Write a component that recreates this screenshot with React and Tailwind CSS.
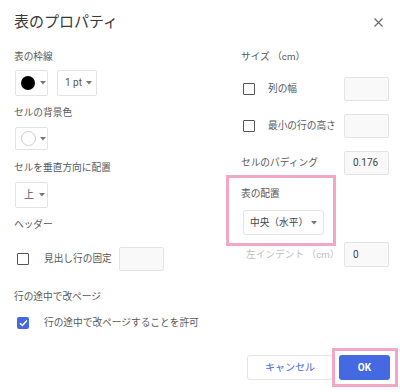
import React from "react";

const Caret = () => (
  <svg width="6" height="4" viewBox="0 0 6 4" className="shrink-0">
    <path d="M0 0h6L3 3.5z" fill="#777" />
  </svg>
);

const Box = ({ checked }) =>
  checked ? (
    <span className="w-[12px] h-[12px] rounded-[2px] bg-[#4469e0] flex items-center justify-center shrink-0">
      <svg width="9" height="8" viewBox="0 0 9 8">
        <path d="M1 4.2l2.3 2.3L8 1.5" stroke="#fff" strokeWidth="1.5" fill="none" />
      </svg>
    </span>
  ) : (
    <span className="w-[12px] h-[12px] rounded-[1px] border-[1.5px] border-[#555] shrink-0" />
  );

const Field = ({ value, className = "" }) => (
  <div
    className={`w-[45px] h-[24px] rounded-[2px] border border-[#e3e3e3] bg-[#f9f9f9] flex items-center pl-[8px] text-[10px] text-[#444] ${className}`}
  >
    {value}
  </div>
);

export default function App() {
  return (
    <div className="relative w-[400px] h-[392px] bg-white text-[#585858] font-['Roboto','Noto_Sans_CJK_JP',sans-serif] flex flex-col">
      <div className="h-[44px] flex items-center justify-between pl-[14px] pr-[16px]">
        <h1 className="text-[15px] text-[#3a3a3a] leading-none">表のプロパティ</h1>
        <svg width="9" height="9" viewBox="0 0 9 9" className="mr-[1px]">
          <path d="M0.5 0.5l8 8M8.5 0.5l-8 8" stroke="#666" strokeWidth="1.1" />
        </svg>
      </div>

      <div className="flex pl-[14px] text-[9.7px] leading-[14px]">
        <div className="w-[227px] flex flex-col">
          <div className="mt-[6px]">表の枠線</div>
          <div className="mt-[6px] flex gap-[9px] pl-[1px]">
            <div className="w-[33px] h-[26px] border border-[#e3e3e3] rounded-[2px] flex items-center gap-[5px] pl-[5px]">
              <span className="w-[14px] h-[14px] rounded-full bg-black" />
              <Caret />
            </div>
            <div className="w-[40px] h-[26px] border border-[#e3e3e3] rounded-[2px] flex items-center gap-[4px] pl-[7px] text-[10px] text-[#555]">
              1 pt
              <Caret />
            </div>
          </div>
          <div className="mt-[10px]">セルの背景色</div>
          <div className="mt-[7px] ml-[1px] w-[33px] h-[23px] border border-[#e3e3e3] rounded-[2px] flex items-center gap-[4px] pl-[5px]">
            <span className="w-[15px] h-[15px] rounded-full border border-[#ccc] bg-white" />
            <Caret />
          </div>
          <div className="mt-[11px]">セルを垂直方向に配置</div>
          <div className="mt-[7px] ml-[1px] w-[33px] h-[26px] border border-[#e3e3e3] rounded-[2px] flex items-center gap-[5px] pl-[8px] text-[10px] text-[#555]">
            上
            <Caret />
          </div>
          <div className="mt-[10px]">ヘッダー</div>
          <div className="mt-[15px] h-[24px] flex items-center pl-[3px]">
            <Box />
            <span className="ml-[15px]">見出し行の固定</span>
            <Field className="ml-[7px]" value="" />
          </div>
          <div className="mt-[19px]">行の途中で改ページ</div>
          <div className="mt-[12px] flex items-center pl-[3px]">
            <Box checked />
            <span className="ml-[15px]">行の途中で改ページすることを許可</span>
          </div>
        </div>

        <div className="w-[148px] flex flex-col">
          <div className="mt-[6px]">サイズ （cm）</div>
          <div className="mt-[13px] h-[24px] flex items-center pl-[2px]">
            <Box />
            <span className="ml-[13px]">列の幅</span>
            <Field className="ml-auto" value="" />
          </div>
          <div className="mt-[13px] h-[24px] flex items-center pl-[2px]">
            <Box />
            <span className="ml-[13px]">最小の行の高さ</span>
            <Field className="ml-auto" value="" />
          </div>
          <div className="mt-[13px] h-[24px] flex items-center">
            <span>セルのパディング</span>
            <Field className="ml-auto" value="0.176" />
          </div>
          <div className="mt-[12px]">表の配置</div>
          <div className="mt-[9px] ml-[2px] w-[81px] h-[25px] border border-[#e3e3e3] rounded-[3px] flex items-center justify-between pl-[6px] pr-[6px] text-[#444]">
            <span>中央（水平）</span>
            <Caret />
          </div>
          <div className="mt-[7px] h-[25px] flex items-center">
            <span className="ml-[5px] text-[#bdbdbd]">左インデント （cm）</span>
            <Field className="ml-auto h-[25px]" value="0" />
          </div>
        </div>
      </div>

      <div className="mt-auto mb-[12px] flex justify-end gap-[6px] pr-[10px]">
        <button className="w-[86px] h-[25px] border border-[#e3e3e3] rounded-[3px] text-[10px] text-[#4469e0] bg-white">
          キャンセル
        </button>
        <button className="w-[51px] h-[25px] rounded-[3px] bg-[#4469e0] text-white text-[10px] font-bold">
          OK
        </button>
      </div>

      <div className="absolute left-[226px] top-[175px] w-[110px] h-[71px] border-[3px] border-[#f2a7c6] pointer-events-none" />
      <div className="absolute left-[332px] top-[348px] w-[66px] h-[39px] border-[3px] border-[#f2a7c6] pointer-events-none" />
    </div>
  );
}
